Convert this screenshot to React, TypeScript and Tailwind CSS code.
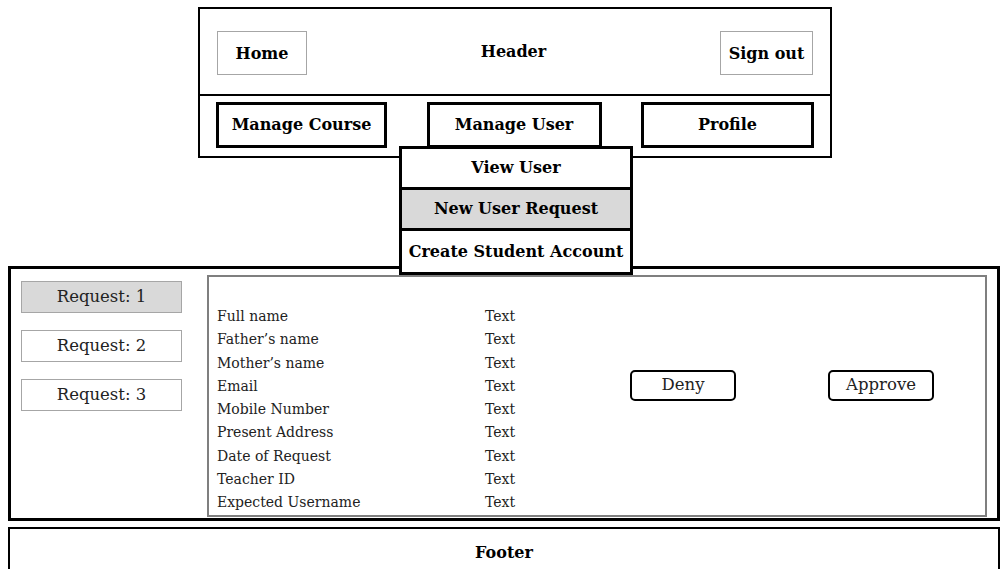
import React from 'react';

const fields = [
  'Full name',
  "Father’s name",
  "Mother’s name",
  'Email',
  'Mobile Number',
  'Present Address',
  'Date of Request',
  'Teacher ID',
  'Expected Username',
];

const App = () => {
  return (
    <div
      className="relative w-[1002px] h-[569px] overflow-hidden bg-white text-black"
      style={{ fontFamily: '"DejaVu Serif", "Liberation Serif", serif' }}
    >
      {/* header */}
      <div className="relative ml-[198px] mt-[7px] w-[634px] h-[151px] border-2 border-black">
        <div className="flex items-start justify-between h-[87px] border-b-2 border-black px-[17px] pt-[22px]">
          <div className="w-[90px] h-[44px] pt-[2px] border border-[#a6a6a6] flex items-center justify-center text-[16px] font-bold">
            Home
          </div>
          <div className="pt-[9px] text-[16px] font-bold">Header</div>
          <div className="w-[93px] h-[44px] pt-[2px] border border-[#a6a6a6] flex items-center justify-center text-[16px] font-bold">
            Sign out
          </div>
        </div>
        <div className="flex justify-between px-[16px] pt-[6px]">
          <div className="w-[171px] h-[46px] border-[3px] border-black flex items-center justify-center text-[16px] font-bold">
            Manage Course
          </div>
          <div className="w-[175px] h-[46px] border-[3px] border-black flex items-center justify-center text-[16px] font-bold">
            Manage User
          </div>
          <div className="w-[173px] h-[46px] border-[3px] border-black flex items-center justify-center text-[16px] font-bold">
            Profile
          </div>
        </div>

        {/* dropdown */}
        <div className="absolute left-[199px] top-[137px] z-10 w-[234px] bg-white border-[3px] border-black text-[16px] font-bold">
          <div className="h-[41px] flex items-center justify-center border-b-[3px] border-black">View User</div>
          <div className="h-[41px] flex items-center justify-center border-b-[3px] border-black bg-[#d9d9d9]">
            New User Request
          </div>
          <div className="h-[41px] flex items-center justify-center">Create Student Account</div>
        </div>
      </div>

      {/* main */}
      <div className="ml-[8px] mt-[108px] w-[992px] h-[255px] border-[3px] border-black flex">
        <div className="w-[196px] pl-[10px] pt-[12px] flex flex-col gap-[17px]">
          <div className="w-[161px] h-[32px] border border-[#a6a6a6] bg-[#d9d9d9] flex items-center justify-center text-[16.5px] text-[#222]">
            Request: 1
          </div>
          <div className="w-[161px] h-[32px] border border-[#a6a6a6] flex items-center justify-center text-[16.5px] text-[#222]">
            Request: 2
          </div>
          <div className="w-[161px] h-[32px] border border-[#a6a6a6] flex items-center justify-center text-[16.5px] text-[#222]">
            Request: 3
          </div>
        </div>
        <div className="mt-[6px] w-[780px] h-[242px] border-2 border-[#7f7f7f] flex pl-[8px] pt-[28px]">
          <div className="w-[268px] flex flex-col text-[14px] leading-[23.3px] text-[#222]">
            {fields.map((f) => (
              <div key={f}>{f}</div>
            ))}
          </div>
          <div className="w-[145px] flex flex-col text-[14px] leading-[23.3px] text-[#222]">
            {fields.map((f) => (
              <div key={f}>Text</div>
            ))}
          </div>
          <div className="flex items-start pt-[65px]">
            <div className="w-[106px] h-[31px] border-2 border-black rounded-[5px] flex items-center justify-center text-[16.5px] text-[#222]">
              Deny
            </div>
            <div className="ml-[92px] w-[106px] h-[31px] border-2 border-black rounded-[5px] flex items-center justify-center text-[16.5px] text-[#222]">
              Approve
            </div>
          </div>
        </div>
      </div>

      {/* footer */}
      <div className="ml-[8px] mt-[6px] w-[992px] h-[50px] border-2 border-black flex items-start justify-center pt-[12px] text-[16px] font-bold">
        Footer
      </div>
    </div>
  );
};

export default App;
